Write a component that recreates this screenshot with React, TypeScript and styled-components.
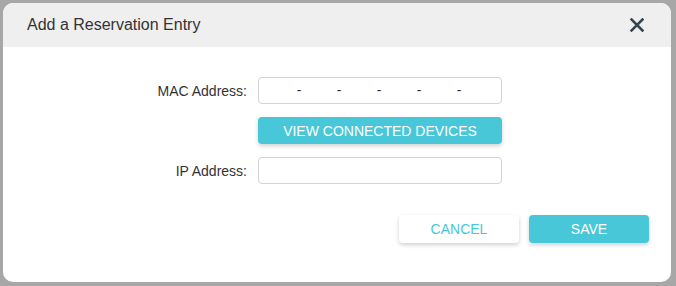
import React from 'react';
import styled, { createGlobalStyle } from 'styled-components';

const GlobalStyle = createGlobalStyle`
  html, body {
    margin: 0;
    padding: 0;
    background: #a7a7a7;
  }
  body {
    font-family: 'Liberation Sans', Arial, sans-serif;
  }
`;

const Backdrop = styled.div`
  width: 676px;
  height: 286px;
  padding: 3px 5px 4px 3px;
  box-sizing: border-box;
`;

const Modal = styled.div`
  width: 668px;
  height: 279px;
  background: #ffffff;
  border-radius: 10px;
  overflow: hidden;
  display: flex;
  flex-direction: column;
`;

const Header = styled.div`
  height: 44px;
  background: #efefef;
  display: flex;
  align-items: center;
  justify-content: space-between;
  padding: 0 26px 0 24px;
  flex-shrink: 0;
`;

const Title = styled.h2`
  margin: 0;
  font-family: 'Liberation Sans', Arial, sans-serif;
  font-size: 16px;
  font-weight: 400;
  color: #333333;
`;

const CloseButton = styled.button`
  border: 0;
  background: none;
  padding: 0;
  width: 16px;
  height: 16px;
  display: flex;
  align-items: center;
  justify-content: center;
  cursor: pointer;
`;

const Body = styled.div`
  padding: 30px 22px 0 0;
  display: flex;
  flex-direction: column;
`;

const Form = styled.div`
  display: grid;
  grid-template-columns: 244px 244px;
  column-gap: 11px;
  row-gap: 13px;
  align-items: center;
`;

const Label = styled.label`
  font-size: 14px;
  color: #333333;
  text-align: right;
`;

const Input = styled.div`
  height: 27px;
  box-sizing: border-box;
  border: 1px solid #d3d3d3;
  border-radius: 4px;
  background: #fff;
  display: flex;
  align-items: center;
  padding-left: 20px;
`;

const Dash = styled.span`
  width: 40px;
  font-size: 14px;
  color: #333;
  text-align: center;
  line-height: 1;
  margin-top: -2px;
`;

const Button = styled.button<{ $primary?: boolean }>`
  height: 28px;
  box-sizing: border-box;
  border: 0;
  border-radius: 4px;
  font-family: 'Liberation Sans', Arial, sans-serif;
  font-size: 14px;
  text-transform: uppercase;
  background: ${(p) => (p.$primary ? '#48c7d8' : '#ffffff')};
  color: ${(p) => (p.$primary ? '#ffffff' : '#48c7d8')};
  box-shadow: 0 2px 4px rgba(0, 0, 0, 0.18);
  padding: 0;
  cursor: pointer;
`;

const WideButton = styled(Button)`
  width: 244px;
  height: 27px;
  grid-column: 2;
`;

const Footer = styled.div`
  display: flex;
  justify-content: flex-end;
  gap: 10px;
  margin-top: 31px;
`;

const FooterButton = styled(Button)`
  width: 120px;
`;

export default function App() {
  return (
    <>
      <GlobalStyle />
      <Backdrop>
        <Modal>
          <Header>
            <Title>Add a Reservation Entry</Title>
            <CloseButton aria-label="Close">
              <svg width="14" height="14" viewBox="0 0 14 14">
                <path d="M1.5 1.5 L12.5 12.5 M12.5 1.5 L1.5 12.5" stroke="#37474f" strokeWidth="2.6" strokeLinecap="square" />
              </svg>
            </CloseButton>
          </Header>
          <Body>
            <Form>
              <Label>MAC Address:</Label>
              <Input>
                {[0, 1, 2, 3, 4].map((i) => (
                  <Dash key={i}>-</Dash>
                ))}
              </Input>
              <WideButton $primary>View Connected Devices</WideButton>
              <Label>IP Address:</Label>
              <Input />
            </Form>
            <Footer>
              <FooterButton>Cancel</FooterButton>
              <FooterButton $primary>Save</FooterButton>
            </Footer>
          </Body>
        </Modal>
      </Backdrop>
    </>
  );
}
